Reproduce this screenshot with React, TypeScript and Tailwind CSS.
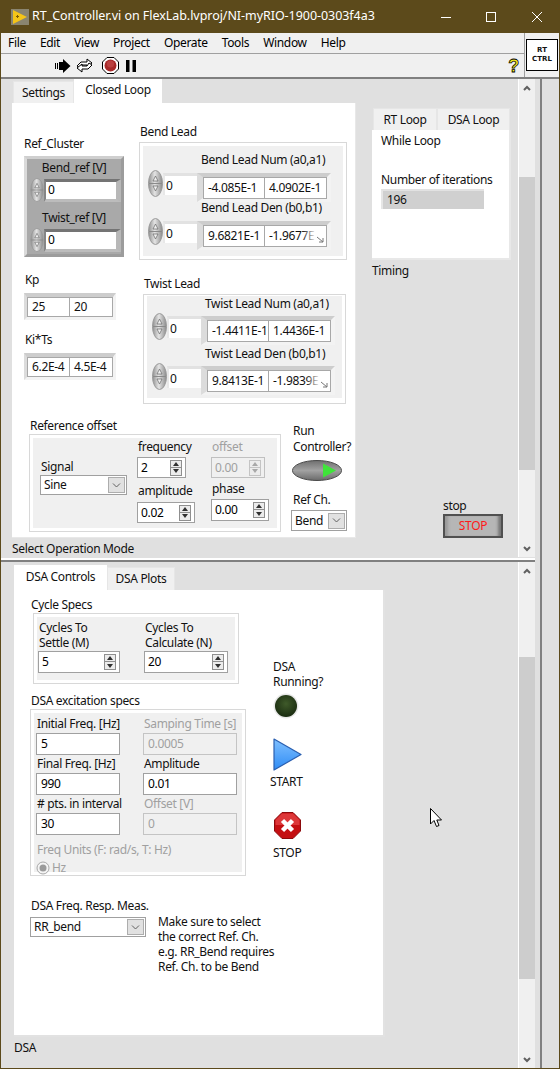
import type { ReactNode } from 'react';

function Spinner({ small }: { small?: boolean }) {
  return (
    <svg className={small ? 'w-[14px] h-[24px] shrink-0' : 'w-[15px] h-[27px] shrink-0'} viewBox="0 0 15 27">
      <defs>
        <linearGradient id="spin" x1="0" x2="1" y1="0" y2="0">
          <stop offset="0" stopColor="#8f8f8f" />
          <stop offset="0.45" stopColor="#e4e4e4" />
          <stop offset="1" stopColor="#8a8a8a" />
        </linearGradient>
      </defs>
      <ellipse cx="7.5" cy="13.5" rx="7" ry="13" fill="url(#spin)" stroke="#9a9a9a" />
      <line x1="1" y1="13.5" x2="14" y2="13.5" stroke="#8a8a8a" />
      <path d="M7.5 6 L5 11 H10 Z M5 16 H10 L7.5 21 Z" fill="#f0f0f0" stroke="#666" strokeWidth="0.7" />
    </svg>
  );
}

// plain white field with thin grey edge
function Field({ value, className, disabled }: { value: string; className: string; disabled?: boolean }) {
  return (
    <div
      className={`flex items-center pl-[4px] border overflow-hidden whitespace-nowrap ${
        disabled ? 'border-[#c4c4c4] bg-[#f0f0f0] text-[#a0a0a0]' : 'border-[#a0a0a0] bg-white text-black'
      } ${className}`}
    >
      {value}
    </div>
  );
}

function NumBox({ value, className, disabled }: { value: string; className: string; disabled?: boolean }) {
  const edge = disabled ? 'border-[#c4c4c4]' : 'border-[#8f8f8f]';
  const fill = disabled ? '#a8a8a8' : '#303030';
  return (
    <div
      className={`flex items-center justify-between border pl-[3px] pr-[3px] ${
        disabled ? 'border-[#c0c0c0] bg-[#f0f0f0] text-[#a0a0a0]' : 'border-[#a0a0a0] bg-white text-black'
      } ${className}`}
    >
      <span>{value}</span>
      <div className="flex flex-col">
        <div className={`w-[12px] h-[8px] border bg-[#ececec] flex items-center justify-center ${edge}`}>
          <svg className="w-[6px] h-[4px]" viewBox="0 0 6 4">
            <path d="M3 0 L6 4 H0 Z" fill={fill} />
          </svg>
        </div>
        <div className={`w-[12px] h-[8px] border border-t-0 bg-[#ececec] flex items-center justify-center ${edge}`}>
          <svg className="w-[6px] h-[4px]" viewBox="0 0 6 4">
            <path d="M0 0 H6 L3 4 Z" fill={fill} />
          </svg>
        </div>
      </div>
    </div>
  );
}

function Select({ value, className }: { value: string; className: string }) {
  return (
    <div className={`flex items-center justify-between shrink-0 border border-[#a0a0a0] bg-white pl-[3px] pr-[1px] ${className}`}>
      <span>{value}</span>
      <div className="w-[17px] h-[16px] bg-[#e1e1e1] border border-[#adadad] flex items-center justify-center">
        <svg className="w-[9px] h-[5px]" viewBox="0 0 9 5">
          <path d="M1 0.5 L4.5 4 L8 0.5" fill="none" stroke="#606060" />
        </svg>
      </div>
    </div>
  );
}

// the recessed LabVIEW frame around a pair of values
function PairFrame({ left, right, className, cell, clipped }: { left: string; right: string; className: string; cell: string; clipped?: boolean }) {
  return (
    <div
      className={`flex items-start shrink-0 border-t-[#cdcdcd] border-l-[#dcdcdc] border-r-[#f3f3f3] border-b-[#f3f3f3] ${className}`}
    >
      <div className={`flex items-center pl-[4px] bg-white border border-[#a8a8a8] whitespace-nowrap overflow-hidden ${cell}`}>{left}</div>
      <div className={`relative flex items-center pl-[4px] bg-white border border-l-0 border-[#a8a8a8] whitespace-nowrap overflow-hidden ${cell}`}>
        {right}
        {clipped && (
          <div className="absolute right-0 top-0 bottom-0 w-[24px] bg-gradient-to-r from-transparent to-white to-60% flex items-end justify-end">
            <svg className="w-[9px] h-[9px] mb-[2px] mr-[1px]" viewBox="0 0 9 9">
              <path d="M1 2 L7 7 M7 3 V7 H3" fill="none" stroke="#777" />
            </svg>
          </div>
        )}
      </div>
    </div>
  );
}

function LeadRow({ value, num, den, cell, className }: { value: string; num: string; den: string; cell: string; className: string }) {
  return (
    <div className={`flex items-start ${className}`}>
      <Spinner />
      <div className="mt-[3px] w-[34px] h-[22px] bg-white border-t-[3px] border-l-[2px] border-t-[#e2e2e2] border-l-[#e8e8e8] pl-[1px] flex items-center">{value}</div>
      <PairFrame
        left={num}
        right={den}
        className="mt-[3px] w-[134px] h-[29px] border-t-[4px] border-l-[6px] border-r-[4px] border-b-[4px]"
        cell={cell}
        clipped={den.endsWith('E')}
      />
    </div>
  );
}

function ClusterField({ label, className }: { label: string; className?: string }) {
  return (
    <div className={`flex flex-col items-center ${className ?? ''}`}>
      <div className="h-[16px] leading-[16px] text-[#111]">{label}</div>
      <div className="flex items-center w-full mt-[2px] pl-[3px]">
        <Spinner small />
        <div className="border-t-[3px] border-b-[3px] border-l-[2px] border-r-[5px] border-t-[#747474] border-l-[#868686] border-r-[#b8b8b8] border-b-[#bcbcbc]">
          <div className="w-[70px] h-[17px] bg-white pl-[2px] flex items-center text-black">0</div>
        </div>
      </div>
    </div>
  );
}

function Scrollbar({ spacer, thumb }: { spacer: string; thumb: string }) {
  return (
    <div className="w-[17px] shrink-0 flex flex-col bg-[#f0f0f0] border-l border-white">
      <div className="h-[17px] flex items-center justify-center">
        <svg className="w-[8px] h-[6px]" viewBox="0 0 8 6">
          <path d="M1 5 L4 2 L7 5" fill="none" stroke="#606060" strokeWidth="2" />
        </svg>
      </div>
      <div className={spacer} />
      <div className={`bg-[#cdcdcd] ${thumb}`} />
      <div className="flex-1" />
      <div className="h-[17px] flex items-center justify-center">
        <svg className="w-[8px] h-[6px]" viewBox="0 0 8 6">
          <path d="M1 1 L4 4 L7 1" fill="none" stroke="#606060" strokeWidth="2" />
        </svg>
      </div>
    </div>
  );
}

function Tab({ children, active, className }: { children: ReactNode; active?: boolean; className: string }) {
  return (
    <div
      className={`flex items-center justify-center ${active ? 'bg-white' : 'bg-[#f0f0f0] border border-b-0 border-[#e6e6e6]'} ${className}`}
    >
      {children}
    </div>
  );
}

function Group({ className, inner, children }: { className: string; inner: string; children: ReactNode }) {
  return (
    <div className={`border border-[#d8d8d8] bg-white p-[3px] ${className}`}>
      <div className={`bg-[#f0f0f0] h-full ${inner}`}>{children}</div>
    </div>
  );
}

function ClosedLoopPanel() {
  return (
    <div className="h-[435px] bg-white border-r border-b border-[#e8e8e8] pl-[12px]">
      <div className="flex items-start h-[301px]">
        <div className="w-[115px] shrink-0 pt-[33px]">
          <div className="h-[16px] leading-[16px]">Ref_Cluster</div>
          <div className="mt-[4px] w-[100px] h-[101px] bg-[#a9a9a9] border-[3px] border-t-[#cfcfcf] border-l-[#dadada] border-r-[#9c9c9c] border-b-[#9c9c9c] pt-[1px]">
            <ClusterField label="Bend_ref [V]" />
            <ClusterField label="Twist_ref [V]" className="mt-[8px]" />
          </div>
          <div className="mt-[15px] h-[16px] leading-[16px] pl-[1px]">Kp</div>
          <PairFrame left="25" right="20" className="mt-[5px] w-[92px] h-[27px] border-t-[4px] border-l-[3px] border-r-[3px] border-b-[3px]" cell="w-[43px] h-[20px]" />
          <div className="mt-[12px] h-[16px] leading-[16px] pl-[1px]">Ki*Ts</div>
          <PairFrame left="6.2E-4" right="4.5E-4" className="mt-[5px] w-[92px] h-[27px] border-t-[4px] border-l-[3px] border-r-[3px] border-b-[3px]" cell="w-[43px] h-[20px]" />
        </div>
        <div className="pt-[21px]">
          <div className="h-[16px] leading-[16px] pl-[1px]">Bend Lead</div>
          <Group className="mt-[2px] w-[208px] h-[118px]" inner="pl-[5px] pt-[6px]">
            <div className="pl-[53px] h-[16px] leading-[16px]">Bend Lead Num (a0,a1)</div>
            <LeadRow value="0" num="-4.085E-1" den="4.0902E-1" className="mt-[2px]" cell="w-[62px] h-[22px]" />
            <div className="pl-[53px] h-[16px] leading-[16px] -mt-[2px]">Bend Lead Den (b0,b1)</div>
            <LeadRow value="0" num="9.6821E-1" den="-1.9677E" className="mt-[2px]" cell="w-[62px] h-[22px]" />
          </Group>
          <div className="mt-[16px] h-[16px] leading-[16px] pl-[5px]">Twist Lead</div>
          <Group className="mt-[2px] ml-[4px] w-[203px] h-[110px]" inner="pl-[5px]">
            <div className="pl-[53px] h-[16px] leading-[16px] -mt-[2px]">Twist Lead Num (a0,a1)</div>
            <LeadRow value="0" num="-1.4411E-1" den="1.4436E-1" className="mt-[1px]" cell="w-[62px] h-[22px]" />
            <div className="pl-[53px] h-[16px] leading-[16px] mt-[1px]">Twist Lead Den (b0,b1)</div>
            <LeadRow value="0" num="9.8413E-1" den="-1.9839E" className="mt-[1px]" cell="w-[62px] h-[22px]" />
          </Group>
        </div>
      </div>
      <div className="flex items-start pl-[5px] mt-[14px]">
        <div className="w-[264px] shrink-0">
          <div className="h-[16px] leading-[16px] pl-[1px]">Reference offset</div>
          <Group className="w-[252px] h-[98px]" inner="flex pl-[7px]">
            <div className="w-[97px] shrink-0 pt-[21px]">
              <div className="h-[16px] leading-[16px] pl-[1px]">Signal</div>
              <Select value="Sine" className="w-[87px] h-[20px]" />
            </div>
            <div className="w-[74px] shrink-0 pt-[1px]">
              <div className="h-[16px] leading-[16px] pl-[1px]">frequency</div>
              <NumBox value="2" className="mt-[2px] w-[49px] h-[21px]" />
              <div className="mt-[5px] h-[16px] leading-[16px] pl-[1px]">amplitude</div>
              <NumBox value="0.02" className="mt-[3px] w-[58px] h-[21px]" />
            </div>
            <div className="pt-[1px]">
              <div className="h-[16px] leading-[16px] pl-[1px] text-[#a0a0a0]">offset</div>
              <NumBox value="0.00" disabled className="mt-[2px] w-[54px] h-[21px]" />
              <div className="mt-[3px] h-[16px] leading-[16px] pl-[1px]">phase</div>
              <NumBox value="0.00" className="mt-[2px] w-[58px] h-[22px]" />
            </div>
          </Group>
        </div>
        <div className="pt-[5px]">
          <div className="leading-[16px]">Run<br />Controller?</div>
          <svg className="mt-[5px] -ml-[1px] w-[50px] h-[21px] block" viewBox="0 0 50 21">
            <defs>
              <linearGradient id="led" x1="0" x2="0" y1="0" y2="1">
                <stop offset="0" stopColor="#6f6f6f" />
                <stop offset="0.5" stopColor="#a2a2a2" />
                <stop offset="1" stopColor="#6a6a6a" />
              </linearGradient>
            </defs>
            <ellipse cx="25" cy="10.5" rx="24.5" ry="10" fill="url(#led)" stroke="#4a4a4a" />
            <path d="M31 3.5 L44 10.5 L31 17.5 Z" fill="#3fe43a" />
          </svg>
          <div className="mt-[11px] h-[16px] leading-[16px]">Ref Ch.</div>
          <Select value="Bend" className="mt-[2px] -ml-[2px] w-[56px] h-[21px]" />
        </div>
      </div>
    </div>
  );
}

function DsaPanel() {
  return (
    <div className="w-[371px] h-[447px] bg-white border-r-2 border-b-2 border-[#e2e2e2] pl-[16px] flex items-start">
      <div className="w-[240px] shrink-0 pt-[7px]">
        <div className="h-[16px] leading-[16px] pl-[1px]">Cycle Specs</div>
        <Group className="ml-[3px] w-[206px] h-[71px]" inner="flex pl-[1px] pt-[3px]">
          <div className="w-[106px] shrink-0">
            <div className="leading-[15px] pl-[1px]">Cycles To<br />Settle (M)</div>
            <NumBox value="5" className="mt-[1px] w-[82px] h-[22px]" />
          </div>
          <div>
            <div className="leading-[15px] pl-[1px]">Cycles To<br />Calculate (N)</div>
            <NumBox value="20" className="mt-[1px] w-[84px] h-[22px]" />
          </div>
        </Group>
        <div className="mt-[9px] h-[16px] leading-[16px] pl-[1px]">DSA excitation specs</div>
        <Group className="w-[216px] h-[167px]" inner="pl-[2px] pt-[3px]">
          <div className="grid grid-cols-[107px_94px] gap-y-[1px] whitespace-nowrap">
            <div className="leading-[16px] pl-[1px]">Initial Freq. [Hz]</div>
            <div className="leading-[16px] pl-[1px] text-[#a0a0a0]">Samping Time [s]</div>
            <Field value="5" className="w-[84px] h-[22px]" />
            <Field value="0.0005" disabled className="w-[94px] h-[22px]" />
            <div className="leading-[16px] pl-[1px]">Final Freq. [Hz]</div>
            <div className="leading-[16px] pl-[1px]">Amplitude</div>
            <Field value="990" className="w-[84px] h-[22px]" />
            <Field value="0.01" className="w-[94px] h-[22px]" />
            <div className="leading-[16px] pl-[1px]">{'# pts. in interval'}</div>
            <div className="leading-[16px] pl-[1px] text-[#a0a0a0]">Offset [V]</div>
            <Field value="30" className="w-[84px] h-[22px]" />
            <Field value="0" disabled className="w-[94px] h-[22px]" />
          </div>
          <div className="mt-[7px] h-[16px] leading-[16px] pl-[1px] text-[#a0a0a0] whitespace-nowrap">Freq Units (F: rad/s, T: Hz)</div>
          <div className="flex items-center text-[#a0a0a0] mt-[1px]">
            <svg className="w-[14px] h-[14px]" viewBox="0 0 14 14">
              <circle cx="7" cy="7" r="6" fill="#f4f4f4" stroke="#a8a8a8" />
              <circle cx="7" cy="7" r="3.5" fill="#9a9a9a" />
            </svg>
            <span className="ml-[2px]">Hz</span>
          </div>
        </Group>
        <div className="mt-[22px] h-[16px] leading-[16px] pl-[1px]">DSA Freq. Resp. Meas.</div>
        <div className="flex items-start">
          <Select value="RR_bend" className="mt-[3px] w-[116px] h-[20px]" />
          <div className="ml-[12px] leading-[15px] whitespace-nowrap">
            Make sure to select<br />the correct Ref. Ch.<br />e.g. RR_Bend requires<br />Ref. Ch. to be Bend
          </div>
        </div>
      </div>
      <div className="pt-[69px] pl-[3px]">
        <div className="leading-[15px]">DSA<br />Running?</div>
        <svg className="mt-[4px] w-[26px] h-[26px] block" viewBox="0 0 26 26">
          <defs>
            <radialGradient id="dsaLed" cx="0.5" cy="0.4" r="0.6">
              <stop offset="0" stopColor="#3f5a2a" />
              <stop offset="1" stopColor="#1a2c10" />
            </radialGradient>
          </defs>
          <circle cx="13" cy="13" r="12.5" fill="#e8e8e8" />
          <circle cx="13" cy="13" r="11" fill="url(#dsaLed)" />
        </svg>
        <svg className="mt-[19px] w-[29px] h-[33px] block" viewBox="0 0 29 33">
          <defs>
            <linearGradient id="startFill" x1="0" x2="0" y1="0" y2="1">
              <stop offset="0" stopColor="#7fc0ff" />
              <stop offset="1" stopColor="#2f8cf5" />
            </linearGradient>
          </defs>
          <path d="M1 1 L28 16.5 L1 32 Z" fill="url(#startFill)" stroke="#2a5fb0" strokeWidth="1.2" strokeLinejoin="round" />
        </svg>
        <div className="mt-[3px] -ml-[3px] leading-[16px]">START</div>
        <svg className="mt-[22px] ml-[1px] w-[27px] h-[27px] block" viewBox="0 0 27 27">
          <path d="M8 0.5 H19 L26.5 8 V19 L19 26.5 H8 L0.5 19 V8 Z" fill="#c40f12" stroke="#8c0a0c" />
          <path d="M8 1.5 H19 L25.5 8 V13 H1.5 V8 Z" fill="#e8494a" opacity="0.7" />
          <path d="M8.5 8.5 L18.5 18.5 M18.5 8.5 L8.5 18.5" stroke="white" strokeWidth="4.5" />
        </svg>
        <div className="mt-[6px] leading-[16px]">STOP</div>
      </div>
    </div>
  );
}

export default function App() {
  return (
    <div className="relative w-[560px] h-[1069px] overflow-hidden flex flex-col bg-[#e0e0e0] text-[12px] tracking-[-0.33px] text-[#111] font-['Noto_Sans',sans-serif] border-x border-b border-[#5c4a1b]">
      {/* title bar */}
      <div className="h-[33px] shrink-0 bg-[#5c4a1b] flex items-center text-white pl-[10px]">
        <svg className="w-[18px] h-[16px] shrink-0" viewBox="0 0 18 16">
          <rect width="18" height="16" fill="#8a8570" />
          <path d="M2 1 L16 8 L2 15 Z" fill="#f5c518" />
          <path d="M5 7.5 H8 M6.5 6 V9" stroke="#7a5a00" />
        </svg>
        <span className="ml-[3px] text-[12.5px] tracking-[-0.05px] whitespace-nowrap">RT_Controller.vi on FlexLab.lvproj/NI-myRIO-1900-0303f4a3</span>
        <div className="flex items-center ml-auto">
          <svg className="w-[10px] h-[10px]" viewBox="0 0 10 10">
            <path d="M0 5.5 H10" stroke="white" />
          </svg>
          <svg className="ml-[35px] w-[10px] h-[10px]" viewBox="0 0 10 10">
            <rect x="0.5" y="0.5" width="9" height="9" fill="none" stroke="white" />
          </svg>
          <svg className="ml-[36px] mr-[17px] w-[10px] h-[10px]" viewBox="0 0 10 10">
            <path d="M0 0 L10 10 M10 0 L0 10" stroke="white" />
          </svg>
        </div>
      </div>

      {/* menu + toolbar */}
      <div className="h-[46px] shrink-0 flex bg-[#f0f0f0] border-b-2 border-[#808080]">
        <div className="flex-1 flex flex-col">
          <div className="h-[20px] flex items-center gap-[14px] pl-[7px] text-black border-b-0">
            {['File', 'Edit', 'View', 'Project', 'Operate', 'Tools', 'Window', 'Help'].map((m) => (
              <span key={m}>{m}</span>
            ))}
          </div>
          <div className="h-[1px] bg-[#a0a0a0]" />
          <div className="flex-1 flex items-center pl-[54px] pr-[5px]">
            <svg className="w-[16px] h-[14px]" viewBox="0 0 16 14">
              <path d="M0 4 H1 V10 H0 Z M2 4 H3 V10 H2 Z M4 3 H8 V0 L15.5 7 L8 14 V11 H4 Z" fill="black" />
            </svg>
            <svg className="ml-[5px] w-[17px] h-[15px]" viewBox="0 0 17 15">
              <path d="M1 8 L5 4 H11 V1 L16 5 L11 9 V7 H6 L4 10 Z" fill="white" stroke="black" />
              <path d="M16 7 L12 11 H6 V14 L1 10 L6 6 V8 H11 L13 5 Z" fill="white" stroke="black" />
            </svg>
            <svg className="ml-[9px] w-[17px] h-[17px]" viewBox="0 0 17 17">
              <path d="M5 0.5 H12 L16.5 5 V12 L12 16.5 H5 L0.5 12 V5 Z" fill="white" stroke="black" />
              <circle cx="8.5" cy="8.5" r="6" fill="#a82a2a" />
              <circle cx="8.5" cy="7" r="3.5" fill="#c85050" opacity="0.6" />
            </svg>
            <svg className="ml-[7px] w-[10px] h-[12px]" viewBox="0 0 10 12">
              <path d="M0 0 H3.5 V12 H0 Z M6.5 0 H10 V12 H6.5 Z" fill="black" />
            </svg>
            <span className="ml-auto font-['Liberation_Sans',sans-serif] font-bold text-[18px] leading-none text-[#f8ee20] [-webkit-text-stroke:0.8px_black]">?</span>
          </div>
        </div>
        <div className="w-[35px] shrink-0 border-l border-[#a0a0a0] pl-[1px] pt-[6px]">
          <div className="w-[32px] h-[32px] bg-white border border-black flex flex-col items-center justify-center text-[7px] font-bold leading-[9px] tracking-normal font-['DejaVu_Sans',sans-serif]">
            <span>RT</span>
            <span>CTRL</span>
          </div>
        </div>
      </div>

      {/* panes */}
      <div className="flex-1 flex min-h-0">
        <div className="w-[534px] shrink-0 flex flex-col">
          <div className="h-[478px] shrink-0 flex">
            <div className="flex-1 flex items-start pl-[11px]">
              <div className="w-[344px] shrink-0">
                <div className="h-[24px] flex items-end pl-[1px]">
                  <Tab className="w-[61px] h-[22px]">Settings</Tab>
                  <Tab active className="w-[88px] h-[24px] pb-[2px]">Closed Loop</Tab>
                </div>
                <ClosedLoopPanel />
                <div className="h-[16px] leading-[16px] mt-[3px]">Select Operation Mode</div>
              </div>
              <div className="ml-[16px] pt-[29px] w-[139px] shrink-0">
                <div className="flex pl-[1px]">
                  <Tab className="w-[64px] h-[22px]">RT Loop</Tab>
                  <Tab className="w-[73px] h-[22px]">DSA Loop</Tab>
                </div>
                <div className="w-[139px] h-[130px] bg-white border-r-2 border-b-2 border-[#e8e8e8] pl-[9px]">
                  <div className="h-[25px] leading-[22px]">While Loop</div>
                  <div className="mt-[17px] h-[16px] leading-[16px]">Number of iterations</div>
                  <div className="mt-[1px] w-[103px] h-[20px] bg-[#d0d0d0] border-t-2 border-l-2 border-t-[#e2e2e2] border-l-[#e6e6e6] pl-[4px] flex items-center">196</div>
                </div>
                <div className="mt-[3px] h-[16px] leading-[16px]">Timing</div>
                <div className="mt-[219px] ml-[71px] h-[16px] leading-[16px]">stop</div>
                <div className="ml-[71px] w-[60px] h-[24px] flex items-center justify-center text-[#ff1a1a] border-2 border-[#505050] bg-[#b6b6b6] shadow-[inset_-5px_0_3px_-2px_#777,inset_5px_0_3px_-2px_#999]">STOP</div>
              </div>
            </div>
            <Scrollbar spacer="h-[81px]" thumb="h-[293px]" />
          </div>

          {/* splitter */}
          <div className="h-[5px] shrink-0 bg-white border-b-2 border-[#808080] border-t border-t-[#e0e0e0]" />

          <div className="flex-1 flex min-h-0">
            <div className="flex-1 pl-[13px]">
              <div className="h-[28px] flex items-end">
                <Tab active className="w-[93px] h-[25px] pb-[2px]">DSA Controls</Tab>
                <Tab className="w-[68px] h-[23px]">DSA Plots</Tab>
              </div>
              <DsaPanel />
              <div className="mt-[3px] h-[16px] leading-[16px]">DSA</div>
            </div>
            <Scrollbar spacer="h-[78px]" thumb="h-[322px]" />
          </div>
        </div>
        <div className="flex-1 ml-[5px]">
          <div className="h-full w-[2px] bg-[#808080]" />
        </div>
      </div>

      {/* mouse pointer */}
      <svg className="absolute left-[429px] top-[808px] w-[13px] h-[20px]" viewBox="0 0 13 20">
        <path d="M0.5 0.5 V16 L4 12.5 L6.5 18.5 L9 17.5 L6.8 12 H11.5 Z" fill="white" stroke="black" />
      </svg>
    </div>
  );
}
